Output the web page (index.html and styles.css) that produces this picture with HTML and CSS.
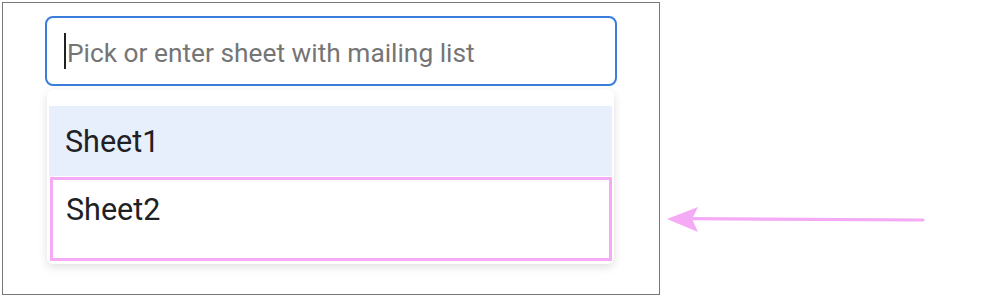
FILE: index.html
```html
<!DOCTYPE html>
<html>
<head>
<meta charset="utf-8">
<link rel="stylesheet" href="styles.css">
</head>
<body>
<div class="page">
  <div class="frame">
    <div class="field">
      <span class="caret"></span>
      <span class="placeholder">Pick or enter sheet with mailing list</span>
    </div>
    <div class="menu">
      <div class="item active">Sheet1</div>
      <div class="item marked">Sheet2</div>
    </div>
  </div>
  <svg class="arrow" width="262" height="32" viewBox="0 0 262 32">
    <line x1="257" y1="16" x2="24" y2="14.6" stroke="#f4aaf4" stroke-width="3.2" stroke-linecap="round"/>
    <polygon points="1,15 32,3 26,15 32,28" fill="#f4aaf4"/>
  </svg>
</div>
</body>
</html>
```
FILE: styles.css
```css
html, body {
  margin: 0;
  padding: 0;
  background: #ffffff;
}
.page {
  display: flex;
  align-items: flex-start;
  font-family: Roboto, "Liberation Sans", sans-serif;
}
.frame {
  box-sizing: border-box;
  width: 658px;
  height: 293px;
  margin: 2px 0 0 2px;
  border: 1px solid #777777;
  padding: 13px 0 0 42px;
}
.field {
  box-sizing: border-box;
  width: 572px;
  height: 70px;
  border: 2px solid #3a7ddb;
  border-radius: 8px;
  display: flex;
  align-items: center;
  padding: 3px 0 0 17px;
}
.caret {
  width: 2px;
  height: 36px;
  margin-top: -3px;
  background: #202124;
  margin-right: 1px;
}
.placeholder {
  font-size: 26.3px;
  color: #757575;
}
.menu {
  box-sizing: border-box;
  width: 567px;
  margin: 4px 0 0 2px;
  padding: 16px 2px 3px 2px;
  background: #fff;
  border-radius: 6px;
  box-shadow: 0 3px 10px rgba(0, 0, 0, 0.13);
}
.item {
  box-sizing: border-box;
  font-size: 30.5px;
  color: #202124;
}
.item.active {
  height: 70px;
  background: #e8effc;
  display: flex;
  align-items: center;
  padding-left: 16px;
}
.item.marked {
  height: 84px;
  width: 562px;
  margin: 1px 0 0 1px;
  border: 3px solid #f4aaf4;
  padding: 12px 0 0 13px;
}
.arrow {
  margin: 204px 0 0 6px;
}
```
